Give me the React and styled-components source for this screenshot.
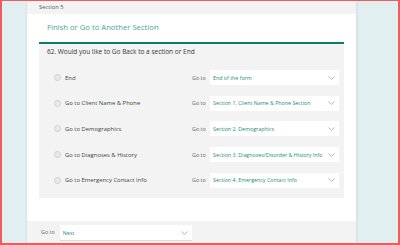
import styled, { createGlobalStyle } from 'styled-components';

const GlobalStyle = createGlobalStyle`
	html, body {
		margin: 0;
		padding: 0;
		background: #e2eff1;
	}
	body {
		font-family: 'Open Sans', 'Noto Sans', sans-serif;
		color: #333;
	}
`;

const rows = [
	{ label: 'End', target: 'End of the form' },
	{ label: 'Go to Client Name & Phone', target: 'Section 1. Client Name & Phone Section' },
	{ label: 'Go to Demographics', target: 'Section 2. Demographics' },
	{ label: 'Go to Diagnoses & History', target: 'Section 3. Diagnoses/Disorder & History Info' },
	{ label: 'Go to Emergency Contact Info', target: 'Section 4. Emergency Contact Info' },
];

const Chevron = () => (
	<svg width="7" height="4" viewBox="0 0 7 4" fill="none">
		<path d="M0.5 0.5 L3.5 3.3 L6.5 0.5" stroke="#9aa6a6" strokeWidth="0.8" />
	</svg>
);

const Page = styled.div`
	box-sizing: border-box;
	width: 400px;
	height: 245px;
	display: flex;
	overflow: hidden;
	border: 2px solid #f15b5b;
	border-top-width: 1px;
	background: #e2eff1;
`;

const Gutter = styled.div`
	width: ${({ $w }) => $w}px;
	flex: ${({ $grow }) => ($grow ? 1 : 'none')};
	background: #e2eff1;
	box-shadow: ${({ $side }) =>
		$side === 'left'
			? 'inset -2px 0 2px -1px rgba(0, 0, 0, 0.06)'
			: 'inset 3px 0 3px -2px rgba(0, 0, 0, 0.08)'};
`;

const Panel = styled.div`
	width: 329px;
	display: flex;
	flex-direction: column;
	background: #fff;
`;

const SectionBar = styled.div`
	height: 13px;
	flex: none;
	background: #f3f3f3;
	padding-left: 12px;
	font-size: 5.8px;
	line-height: 12px;
	color: #555;
`;

const Body = styled.div`
	padding: 0 12px;
	height: 207px;
	flex: none;
`;

const Title = styled.div`
	height: 28px;
	padding-left: 8px;
	font-size: 7.7px;
	line-height: 27px;
	color: #4aa39a;
`;

const Card = styled.div`
	border-top: 2px solid #0e7a6a;
	background: #f3f3f3;
	padding: 3px 0 5px 8px;
`;

const Question = styled.div`
	font-size: 6.5px;
	line-height: 10px;
	color: #333;
	margin-bottom: 8px;
`;

const Row = styled.div`
	height: 25.6px;
	display: grid;
	grid-template-columns: 145px 18px 129px;
	align-items: center;
`;

const Choice = styled.div`
	display: flex;
	align-items: center;
	gap: 4px;
	padding-left: 7px;
	font-size: 5.9px;
	color: #444;
`;

const Radio = styled.span`
	box-sizing: border-box;
	width: 7px;
	height: 7px;
	border-radius: 50%;
	border: 0.6px solid #d2d2d2;
	background: #e8e8e8;
`;

const GoLabel = styled.span`
	font-size: 5.4px;
	color: #666;
`;

const Select = styled.div`
	box-sizing: border-box;
	height: 15px;
	width: ${({ $w }) => $w}px;
	display: flex;
	align-items: center;
	justify-content: space-between;
	padding: 0 4px 0 3px;
	background: #fff;
	font-size: 5.3px;
	color: #1f8a7e;
	box-shadow: ${({ $raised }) => ($raised ? '0 1px 0 #dadada' : 'none')};
`;

const Footer = styled.div`
	flex: 1;
	background: #f3f3f3;
	display: flex;
	align-items: flex-start;
	gap: 5px;
	padding: 4px 0 0 14px;
`;

export default function App() {
	return (
		<>
			<GlobalStyle />
			<Page>
				<Gutter $w={25} $side="left" />
				<Panel>
					<SectionBar>Section 5</SectionBar>
					<Body>
						<Title>Finish or Go to Another Section</Title>
						<Card>
							<Question>62. Would you like to Go Back to a section or End</Question>
							{rows.map(({ label, target }) => (
								<Row key={label}>
									<Choice>
										<Radio />
										{label}
									</Choice>
									<GoLabel>Go to</GoLabel>
									<Select $w={129}>
										{target}
										<Chevron />
									</Select>
								</Row>
							))}
						</Card>
					</Body>
					<Footer>
						<GoLabel style={{ lineHeight: '15px' }}>Go to</GoLabel>
						<Select $w={132} $raised>
							Next
							<Chevron />
						</Select>
					</Footer>
				</Panel>
				<Gutter $grow $side="right" />
			</Page>
		</>
	);
}
